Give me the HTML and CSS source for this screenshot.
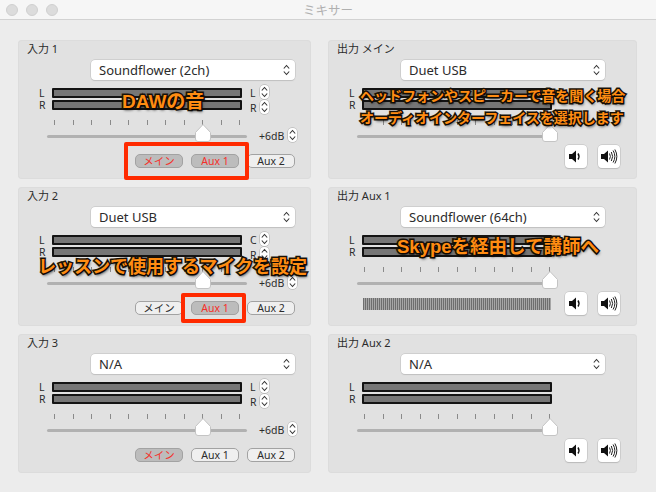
FILE: index.html
```html
<!DOCTYPE html>
<html lang="ja">
<head>
  <meta charset="UTF-8">
  <title>ミキサー</title>
  <link rel="stylesheet" href="styles.css">
</head>
<body>
  <svg class="icon-defs" width="0" height="0">
    <symbol id="updown" viewBox="0 0 9 14">
      <path d="M1.8 5.5 L4.5 2.5 L7.2 5.5 M1.8 8.5 L4.5 11.5 L7.2 8.5" fill="none" stroke="#333" stroke-width="1.1"/>
    </symbol>
    <symbol id="thumb" viewBox="0 0 16 18">
      <path d="M8 .5 L15.5 8.5 V15 Q15.5 17.5 13 17.5 H3 Q.5 17.5 .5 15 V8.5 Z" fill="#fff" stroke="#c4c4c4"/>
    </symbol>
    <symbol id="speaker-low" viewBox="0 0 22 23">
      <path d="M4 9 H7 L11 5.5 V17.5 L7 14 H4 Z" fill="#111"/>
      <path d="M13 8.5 Q15 11.5 13 14.5" fill="none" stroke="#111" stroke-width="1.4"/>
    </symbol>
    <symbol id="speaker-high" viewBox="0 0 22 23">
      <path d="M3 9 H6 L10 5.5 V17.5 L6 14 H3 Z" fill="#111"/>
      <path d="M11.5 8.5 Q13.3 11.5 11.5 14.5 M13.3 7 Q16 11.5 13.3 16 M15.1 5.5 Q18.6 11.5 15.1 17.5 M16.9 4.5 Q20.8 11.5 16.9 18.5" fill="none" stroke="#222" stroke-width="1"/>
    </symbol>
  </svg>

  <div class="window">
    <div class="titlebar">
      <span class="light"></span>
      <span class="light"></span>
      <span class="light"></span>
      <span class="window-title">ミキサー</span>
    </div>

    <div class="mixer">
      <!-- row 1 -->
      <section class="panel">
        <div class="panel-title">入力 1</div>
        <div class="device"><span>Soundflower (2ch)</span><svg class="device-arrows"><use href="#updown"/></svg></div>
        <div class="meters">
          <div class="meter-row"><span class="ch">L</span><div class="meter"></div><span class="ch-out">L</span><svg class="stepper"><use href="#updown"/></svg></div>
          <div class="meter-row"><span class="ch">R</span><div class="meter"></div><span class="ch-out">R</span><svg class="stepper"><use href="#updown"/></svg></div>
        </div>
        <div class="ticks"><i></i><i></i><i></i><i></i><i></i><i></i><i></i><i></i><i></i><i></i><i></i></div>
        <div class="slider">
          <div class="track"><svg class="thumb"><use href="#thumb"/></svg></div>
          <span class="gain">+6dB</span><svg class="stepper gain-stepper"><use href="#updown"/></svg>
        </div>
        <div class="routes">
          <button class="route on">メイン</button>
          <button class="route on">Aux 1</button>
          <button class="route">Aux 2</button>
        </div>
      </section>

      <section class="panel">
        <div class="panel-title">出力 メイン</div>
        <div class="device"><span>Duet USB</span><svg class="device-arrows"><use href="#updown"/></svg></div>
        <div class="meters">
          <div class="meter-row"><span class="ch">L</span><div class="meter"></div></div>
          <div class="meter-row"><span class="ch">R</span><div class="meter"></div></div>
        </div>
        <div class="ticks"><i></i><i></i><i></i><i></i><i></i><i></i><i></i><i></i><i></i><i></i><i></i></div>
        <div class="slider">
          <div class="track"><svg class="thumb thumb-max"><use href="#thumb"/></svg></div>
        </div>
        <div class="output-row">
          <div class="speakers">
            <button class="speaker"><svg><use href="#speaker-low"/></svg></button>
            <button class="speaker"><svg><use href="#speaker-high"/></svg></button>
          </div>
        </div>
      </section>

      <!-- row 2 -->
      <section class="panel">
        <div class="panel-title">入力 2</div>
        <div class="device"><span>Duet USB</span><svg class="device-arrows"><use href="#updown"/></svg></div>
        <div class="meters">
          <div class="meter-row"><span class="ch">L</span><div class="meter"></div><span class="ch-out">C</span><svg class="stepper"><use href="#updown"/></svg></div>
          <div class="meter-row"><span class="ch">R</span><div class="meter"></div><span class="ch-out">R</span><svg class="stepper"><use href="#updown"/></svg></div>
        </div>
        <div class="ticks"><i></i><i></i><i></i><i></i><i></i><i></i><i></i><i></i><i></i><i></i><i></i></div>
        <div class="slider">
          <div class="track"><svg class="thumb"><use href="#thumb"/></svg></div>
          <span class="gain">+6dB</span><svg class="stepper gain-stepper"><use href="#updown"/></svg>
        </div>
        <div class="routes">
          <button class="route">メイン</button>
          <button class="route on">Aux 1</button>
          <button class="route">Aux 2</button>
        </div>
      </section>

      <section class="panel">
        <div class="panel-title">出力 Aux 1</div>
        <div class="device"><span>Soundflower (64ch)</span><svg class="device-arrows"><use href="#updown"/></svg></div>
        <div class="meters">
          <div class="meter-row"><span class="ch">L</span><div class="meter"></div></div>
          <div class="meter-row"><span class="ch">R</span><div class="meter"></div></div>
        </div>
        <div class="ticks"><i></i><i></i><i></i><i></i><i></i><i></i><i></i><i></i><i></i><i></i><i></i></div>
        <div class="slider">
          <div class="track"><svg class="thumb thumb-max"><use href="#thumb"/></svg></div>
        </div>
        <div class="output-row">
          <div class="level-strip"></div>
          <div class="speakers">
            <button class="speaker"><svg><use href="#speaker-low"/></svg></button>
            <button class="speaker"><svg><use href="#speaker-high"/></svg></button>
          </div>
        </div>
      </section>

      <!-- row 3 -->
      <section class="panel">
        <div class="panel-title">入力 3</div>
        <div class="device"><span>N/A</span><svg class="device-arrows"><use href="#updown"/></svg></div>
        <div class="meters">
          <div class="meter-row"><span class="ch">L</span><div class="meter"></div><span class="ch-out">L</span><svg class="stepper"><use href="#updown"/></svg></div>
          <div class="meter-row"><span class="ch">R</span><div class="meter"></div><span class="ch-out">R</span><svg class="stepper"><use href="#updown"/></svg></div>
        </div>
        <div class="ticks"><i></i><i></i><i></i><i></i><i></i><i></i><i></i><i></i><i></i><i></i><i></i></div>
        <div class="slider">
          <div class="track"><svg class="thumb"><use href="#thumb"/></svg></div>
          <span class="gain">+6dB</span><svg class="stepper gain-stepper"><use href="#updown"/></svg>
        </div>
        <div class="routes">
          <button class="route on">メイン</button>
          <button class="route">Aux 1</button>
          <button class="route">Aux 2</button>
        </div>
      </section>

      <section class="panel">
        <div class="panel-title">出力 Aux 2</div>
        <div class="device"><span>N/A</span><svg class="device-arrows"><use href="#updown"/></svg></div>
        <div class="meters">
          <div class="meter-row"><span class="ch">L</span><div class="meter"></div></div>
          <div class="meter-row"><span class="ch">R</span><div class="meter"></div></div>
        </div>
        <div class="ticks"><i></i><i></i><i></i><i></i><i></i><i></i><i></i><i></i><i></i><i></i><i></i></div>
        <div class="slider">
          <div class="track"><svg class="thumb thumb-max"><use href="#thumb"/></svg></div>
        </div>
        <div class="output-row">
          <div class="speakers">
            <button class="speaker"><svg><use href="#speaker-low"/></svg></button>
            <button class="speaker"><svg><use href="#speaker-high"/></svg></button>
          </div>
        </div>
      </section>
    </div>

    <!-- screenshot annotations -->
    <div class="mark mark-1"></div>
    <div class="mark mark-2"></div>
    <div class="note note-daw">DAWの音</div>
    <div class="note note-main">ヘッドフォンやスピーカーで音を聞く場合<br>オーディオインターフェイスを選択します</div>
    <div class="note note-mic">レッスンで使用するマイクを設定</div>
    <div class="note note-skype">Skypeを経由して講師へ</div>
  </div>
</body>
</html>
```

FILE: styles.css
```css
body {
  margin: 0;
  overflow: hidden;
  font-family: "Noto Sans", "Noto Sans CJK JP", sans-serif;
  color: #2b2b2b;
}
.icon-defs {
  position: absolute;
}
.window {
  position: relative;
  width: 656px;
  height: 492px;
  background: #ececec;
  overflow: hidden;
}

/* title bar */
.titlebar {
  position: relative;
  display: flex;
  align-items: center;
  gap: 8px;
  height: 19px;
  padding-left: 6px;
  background: #f6f6f6;
  border-bottom: 1px solid #d2d2d2;
}
.light {
  width: 10px;
  height: 10px;
  border: 1px solid #d0d0d0;
  border-radius: 50%;
  background: #dcdcdc;
}
.window-title {
  position: absolute;
  left: 0;
  right: 0;
  text-align: center;
  font-size: 12.5px;
  color: #b0b0b0;
}

/* panels */
.mixer {
  display: grid;
  grid-template-columns: 293px 309px;
  grid-auto-rows: 139px;
  column-gap: 17px;
  row-gap: 8px;
  padding: 20px 0 0 18px;
}
.panel {
  box-sizing: border-box;
  background: #e1e1e1;
  border-radius: 4px;
  box-shadow: inset 0 0 0 1px #dcdcdc;
}
.panel-title {
  height: 13px;
  margin: 2px 0 0 9px;
  font-size: 11px;
  line-height: 13px;
}

.device {
  display: flex;
  align-items: center;
  justify-content: space-between;
  box-sizing: border-box;
  width: 204px;
  height: 20px;
  margin: 5px 0 0 73px;
  padding: 0 4px 1px 8px;
  background: #fff;
  border-radius: 4px;
  box-shadow: 0 0 0 .5px #bdbdbd, 0 1px 1px #c4c4c4;
  font-size: 13px;
}
.device-arrows {
  width: 9px;
  height: 14px;
}

/* level meters */
.meters {
  margin-top: 8px;
}
.meter-row {
  display: flex;
  height: 10px;
  margin-bottom: 2px;
}
.ch {
  box-sizing: border-box;
  width: 34px;
  padding-left: 21px;
  font-size: 10.5px;
  line-height: 10px;
}
.meter {
  box-sizing: border-box;
  width: 190px;
  height: 10px;
  background: #767676;
  border: 2px solid #141414;
  border-radius: 1px;
}
.ch-out {
  width: 10px;
  margin-left: 8px;
  font-size: 10.5px;
  line-height: 10px;
}
.stepper {
  box-sizing: border-box;
  width: 9px;
  height: 14px;
  background: #fff;
  border-radius: 4px;
  box-shadow: 0 0 0 .5px #a8a8a8;
}
.meter-row:first-child .stepper {
  margin-top: -3px;
}
.meter-row:last-child .ch-out {
  margin-top: 3px;
}

.ticks {
  display: flex;
  justify-content: space-between;
  width: 186px;
  height: 5px;
  margin: 10px 0 0 36px;
}
.ticks i {
  width: 1px;
  background: #8a8a8a;
}

/* fader */
.slider {
  display: flex;
  height: 20px;
  margin: -1px 0 0 29px;
}
.track {
  position: relative;
  width: 200px;
  height: 3px;
  margin-top: 11px;
  border-radius: 2px;
  background: #b1b1b1;
}
.thumb {
  position: absolute;
  left: 148px;
  top: -11px;
  width: 16px;
  height: 18px;
}
.thumb-max {
  left: 185px;
}
.gain {
  margin: 6px 0 0 12px;
  font-size: 10.5px;
  line-height: 13px;
}
.gain-stepper {
  margin: 4px 0 0 4px;
}

/* routing buttons */
.routes {
  display: flex;
  gap: 8px;
  margin: 10px 0 0 117px;
}
.route {
  box-sizing: border-box;
  width: 48px;
  height: 14px;
  padding: 0;
  border: 1px solid #a2a2a2;
  border-radius: 5px;
  background: #efefef;
  color: #2b2b2b;
  font-family: inherit;
  font-size: 10.5px;
  line-height: 12px;
}
.route.on {
  background: #bcbcbc;
  color: #f5302a;
}

/* output speaker buttons */
.output-row {
  display: flex;
  align-items: center;
  width: 257px;
  margin: 1px 0 0 35px;
}
.level-strip {
  width: 188px;
  height: 12px;
  background: repeating-linear-gradient(90deg, #6e6e6e 0 1px, #a6a6a6 1px 2px);
}
.speakers {
  display: flex;
  gap: 11px;
  margin-left: auto;
}
.speaker {
  box-sizing: border-box;
  width: 22px;
  height: 23px;
  padding: 0;
  background: #fff;
  border: 0;
  border-radius: 4px;
  box-shadow: 0 0 0 .5px #bbb, 0 1px 1px #bbb;
}
.speaker svg {
  display: block;
  width: 22px;
  height: 23px;
}

/* annotations over the window */
.mark {
  position: absolute;
  box-sizing: border-box;
  border: 4px solid #ff2a00;
  border-radius: 2px;
}
.mark-1 {
  left: 124px;
  top: 142px;
  width: 125px;
  height: 38px;
}
.mark-2 {
  left: 181px;
  top: 293px;
  width: 65px;
  height: 30px;
}
.note {
  position: absolute;
  font-family: "Liberation Sans", "Noto Sans CJK JP", sans-serif;
  font-weight: 700;
  white-space: nowrap;
  color: #ff8c12;
  -webkit-text-stroke: 3px #1a1208;
  paint-order: stroke fill;
  text-shadow: 1px 2px 3px rgba(0,0,0,.8);
}
.note-daw {
  left: 122px;
  top: 88px;
  font-size: 19px;
  line-height: 28px;
}
.note-main {
  left: 360px;
  top: 85px;
  font-size: 14px;
  line-height: 22px;
}
.note-mic {
  left: 38px;
  top: 253px;
  font-size: 18px;
  line-height: 28px;
}
.note-skype {
  left: 397px;
  top: 233px;
  font-size: 18.5px;
  line-height: 28px;
}
```
